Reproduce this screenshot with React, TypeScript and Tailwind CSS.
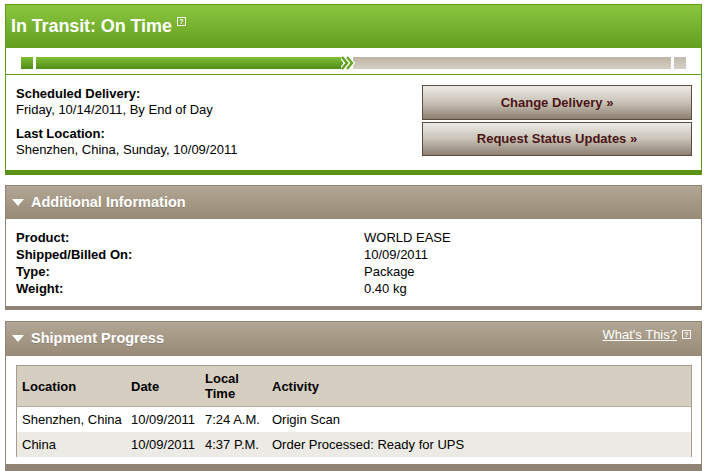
import React from "react";

const font = { fontFamily: '"Liberation Sans", Arial, Helvetica, sans-serif' };

function HelpIcon({ className = "" }: { className?: string }) {
  return (
    <span
      className={`inline-flex items-center justify-center w-[9px] h-[9px] border border-white/90 text-[7px] leading-none font-bold text-white ${className}`}
    >
      ?
    </span>
  );
}

function Triangle() {
  return (
    <svg width="12" height="8" viewBox="0 0 12 8" className="mr-[7px]">
      <polygon points="0,0 12,0 6,7" fill="#ffffff" />
    </svg>
  );
}

function ProgressBar() {
  return (
    <div className="flex items-center h-[12px]">
      <div className="w-[12px] h-[12px] bg-gradient-to-b from-[#7fbe36] to-[#4f8d19]" />
      <div className="ml-[3px] flex-1 flex items-center h-[12px]">
        <div className="w-[307px] h-[12px] bg-gradient-to-b from-[#80bf37] to-[#4f8d19]" />
        <svg width="14" height="16" viewBox="0 0 14 16" className="-ml-[2px] -my-[2px] z-10">
          <polyline points="1,2 6,8 1,14" fill="none" stroke="#ffffff" strokeWidth="5" strokeLinejoin="miter" />
          <polyline points="6,2 11,8 6,14" fill="none" stroke="#ffffff" strokeWidth="5" strokeLinejoin="miter" />
          <polyline points="1,2 6,8 1,14" fill="none" stroke="#5e9d1f" strokeWidth="2.5" />
          <polyline points="6,2 11,8 6,14" fill="none" stroke="#6aab27" strokeWidth="2.5" />
        </svg>
        <div className="flex-1 -ml-[2px] h-[12px] bg-gradient-to-b from-[#bdb3a5] to-[#d6cfc3]" />
      </div>
      <div className="ml-[3px] w-[12px] h-[12px] bg-gradient-to-b from-[#c3baad] to-[#d6cfc3]" />
    </div>
  );
}

function ActionButton({ label }: { label: string }) {
  return (
    <button className="w-full border border-[#5a4c3c] bg-gradient-to-b from-[#ecebe6] via-[#c9c2b7] to-[#8d8072] text-[13px] font-bold text-[#4a1414] text-center">
      {label}
    </button>
  );
}

function PanelHeader({ title, right, h }: { title: string; right?: React.ReactNode; h: string }) {
  return (
    <div className={`${h} flex items-center justify-between bg-gradient-to-b from-[#b2a694] to-[#978a77] pl-[6px] pr-[10px]`}>
      <div className="flex items-center text-[14.5px] font-bold text-white [text-shadow:0_1px_0_rgba(0,0,0,0.15)]">
        <Triangle />
        {title}
      </div>
      {right}
    </div>
  );
}

const info = [
  ["Product:", "WORLD EASE"],
  ["Shipped/Billed On:", "10/09/2011"],
  ["Type:", "Package"],
  ["Weight:", "0.40 kg"],
];

const rows = [
  { loc: "Shenzhen, China", date: "10/09/2011", time: "7:24 A.M.", act: "Origin Scan", bg: "bg-white" },
  { loc: "China", date: "10/09/2011", time: "4:37 P.M.", act: "Order Processed: Ready for UPS", bg: "bg-[#ebeae4]" },
];

export default function App() {
  return (
    <div className="bg-white w-[707px] h-[471px] overflow-hidden pt-[4px] px-[5px] text-black" style={font}>
      {/* status box */}
      <div className="border border-[#5f9c1c] border-b-0">
        <div className="h-[43px] flex items-center pl-[5px] bg-gradient-to-b from-[#8bc63e] to-[#629f20]">
          <span className="text-[18px] font-bold text-white tracking-[-0.1px]">In Transit: On Time</span>
          <HelpIcon className="ml-[5px] -mt-[10px]" />
        </div>
        <div className="h-[27px] pt-[9px] px-[15px] border-b border-[#5f9c1c]">
          <ProgressBar />
        </div>
        <div className="flex justify-between pl-[10px] pr-[9px] pt-[10px] pb-[12px] text-[13px] leading-[16px]">
          <div>
            <div className="pt-[1px] font-bold">Scheduled Delivery:</div>
            <div>Friday, 10/14/2011, By End of Day</div>
            <div className="mt-[8px] font-bold">Last Location:</div>
            <div>Shenzhen, China, Sunday, 10/09/2011</div>
          </div>
          <div className="w-[270px] flex flex-col gap-[2px]">
            <div className="h-[35px] flex">
              <ActionButton label="Change Delivery »" />
            </div>
            <div className="h-[34px] flex">
              <ActionButton label="Request Status Updates »" />
            </div>
          </div>
        </div>
      </div>
      <div className="h-[5px] bg-[#5a9217]" />

      {/* additional information */}
      <div className="mt-[10px] border border-[#8f8473] border-b-0">
        <PanelHeader h="h-[33px]" title="Additional Information" />
        <div className="grid grid-cols-[348px_1fr] pl-[10px] pt-[10px] pb-[9px] text-[13px] leading-[17px]">
          {info.map(([k, v]) => (
            <React.Fragment key={k}>
              <div className="font-bold">{k}</div>
              <div>{v}</div>
            </React.Fragment>
          ))}
        </div>
      </div>
      <div className="h-[4px] bg-[#8f8473]" />

      {/* shipment progress */}
      <div className="mt-[11px] border border-[#8f8473] border-b-0">
        <PanelHeader
          h="h-[34px]"
          title="Shipment Progress"
          right={
            <div className="flex items-center -mt-[9px] text-[13px] text-white">
              <span className="underline">What's This?</span>
              <HelpIcon className="ml-[5px]" />
            </div>
          }
        />
        <div className="pl-[10px] pr-[9px] pt-[9px] pb-[7px]">
          <div className="border-t border-l border-r border-[#a79c8c] text-[13px]">
            <div className="grid grid-cols-[114px_74px_67px_1fr] h-[41px] items-center bg-[#d5cec1] border-b border-[#b8ae9f] font-bold leading-[15px]">
              <div className="pl-[5px]">Location</div>
              <div>Date</div>
              <div>Local<br />Time</div>
              <div>Activity</div>
            </div>
            {rows.map((r) => (
              <div key={r.loc} className={`grid grid-cols-[114px_74px_67px_1fr] h-[25px] items-center ${r.bg}`}>
                <div className="pl-[5px]">{r.loc}</div>
                <div>{r.date}</div>
                <div>{r.time}</div>
                <div>{r.act}</div>
              </div>
            ))}
          </div>
        </div>
      </div>
      <div className="h-[7px] bg-[#8f8473]" />
    </div>
  );
}
